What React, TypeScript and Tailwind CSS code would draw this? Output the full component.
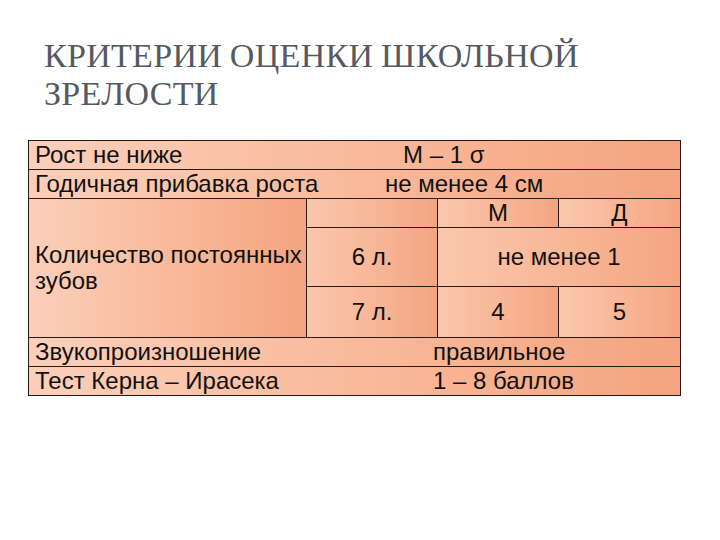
import React from 'react';

const cell = 'flex items-center bg-linear-to-r from-[#fbcfba] via-[#f9ba9b] to-[#f4a480]';
const cellCenter = 'flex items-center justify-center bg-linear-to-r from-[#fac7ae] via-[#f8b797] to-[#f4a583]';

function WideRow({ label, value, offset }: { label: string; value: string; offset: string }) {
  return (
    <div className={`${cell} col-span-4`}>
      <span className="w-[356px] shrink-0 pl-[6px] whitespace-nowrap">{label}</span>
      <span className={`${offset} whitespace-nowrap`}>{value}</span>
    </div>
  );
}

export default function App() {
  return (
    <div className="w-[720px] h-[540px] bg-white relative overflow-hidden">
      {/* Title */}
      <div className="pt-[37px] pl-[44px]">
        <h1 className="font-serif text-[34px] leading-[38px] text-[#555a62] tracking-[0.3px]">
          КРИТЕРИИ ОЦЕНКИ ШКОЛЬНОЙ
          <br />
          ЗРЕЛОСТИ
        </h1>
      </div>

      {/* Table */}
      <div className="mt-[27px] ml-[28px] w-[653px] border border-[#2a1a12] bg-[#2a1a12] grid grid-cols-[277px_130px_120px_121px] grid-rows-[28px_28px_28px_58px_50px_28px_28px] gap-px text-[24px] text-[#111] font-['Liberation_Sans',Arial,sans-serif]">
        <WideRow label="Рост не ниже" value="М – 1 σ" offset="ml-[18px]" />
        <WideRow label="Годичная прибавка роста" value="не менее 4 см" offset="ml-0" />

        <div className={`${cell} row-span-3 pl-[6px] leading-[26px]`}>
          <span>
            Количество постоянных
            <br />
            зубов
          </span>
        </div>
        <div className={cellCenter} />
        <div className={cellCenter}>М</div>
        <div className={cellCenter}>Д</div>

        <div className={cellCenter}>6 л.</div>
        <div className={`${cellCenter} col-span-2`}>не менее 1</div>

        <div className={cellCenter}>7 л.</div>
        <div className={cellCenter}>4</div>
        <div className={cellCenter}>5</div>

        <WideRow label="Звукопроизношение" value="правильное" offset="ml-[48px]" />
        <WideRow label="Тест Керна – Ирасека" value="1 – 8 баллов" offset="ml-[48px]" />
      </div>
    </div>
  );
}
